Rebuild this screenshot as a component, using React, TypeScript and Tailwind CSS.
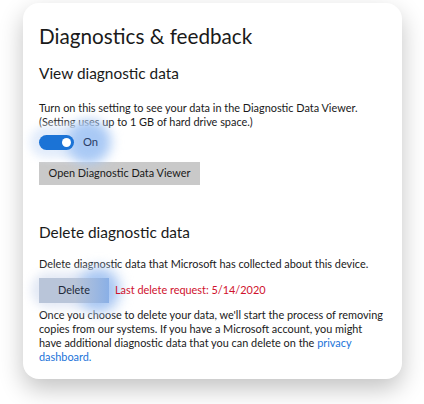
import React from "react";

export default function App() {
  return (
    <div
      className="w-[424px] h-[404px] bg-white overflow-hidden pt-[3px] pl-[23px]"
      style={{ fontFamily: 'Lato, "Open Sans", sans-serif' }}
    >
      <div className="w-[379px] h-[376px] bg-white rounded-[16px] shadow-[0_10px_24px_rgba(0,0,0,0.24)] pl-[16px] pr-[6px] pt-[19px] text-[#1a1a1a]">
        <h1 className="text-[20.7px] leading-[28px] font-normal">Diagnostics &amp; feedback</h1>
        <h2 className="mt-[12px] text-[15.4px] leading-[22px]">View diagnostic data</h2>
        <p className="mt-[17px] text-[10.9px] leading-[13.5px] whitespace-nowrap">
          Turn on this setting to see your data in the Diagnostic Data Viewer.
          <br />
          (Setting uses up to 1 GB of hard drive space.)
        </p>
        <div className="relative mt-[1px] h-[26px] flex items-center">
          <div className="absolute left-[-9px] top-[-3px] w-[68px] h-[32px] rounded-full bg-[#e2ecfb] blur-[4px]" />
          <div className="absolute left-[28px] top-[-9px] w-[44px] h-[44px] rounded-full bg-[#a9c9f5] blur-[6px]" />
          <div className="relative w-[35px] h-[15px] rounded-full bg-[#1b73d6] flex items-center justify-end pr-[3px]">
            <div className="w-[9px] h-[9px] rounded-full bg-white" />
          </div>
          <span className="relative ml-[9px] text-[11.2px] text-[#2a4068]">On</span>
        </div>
        <button className="mt-[7px] w-[161px] h-[23px] bg-[#c9c9c9] text-[10.9px] text-[#1a1a1a] flex items-center justify-center">
          Open Diagnostic Data Viewer
        </button>
        <h2 className="mt-[36px] text-[15.4px] leading-[22px]">Delete diagnostic data</h2>
        <p className="mt-[14px] text-[10.9px] leading-[14px] whitespace-nowrap">
          Delete diagnostic data that Microsoft has collected about this device.
        </p>
        <div className="relative mt-[7px] h-[25px] flex items-center">
          <div className="absolute left-[-8px] top-[-6px] w-[84px] h-[36px] rounded-full bg-[#e3e9f5] blur-[5px]" />
          <div className="absolute left-[40px] top-[-10px] w-[40px] h-[44px] rounded-full bg-[#a6c6f3] blur-[7px]" />
          <div className="relative w-[70px] h-[25px] bg-[#b9c5d9] flex items-center overflow-hidden">
            <div className="absolute right-0 top-0 w-[34px] h-full bg-gradient-to-r from-transparent to-[#7eaae9] opacity-80" />
            <span className="relative w-full text-center text-[10.9px] text-[#1f2a3a]">Delete</span>
          </div>
          <span className="relative ml-[6px] text-[10.9px] text-[#d0122d]">Last delete request: 5/14/2020</span>
        </div>
        <p className="mt-[5px] text-[10.9px] leading-[14px] whitespace-nowrap">
          Once you choose to delete your data, we'll start the process of removing
          <br />
          copies from our systems. If you have a Microsoft account, you might
          <br />
          have additional diagnostic data that you can delete on the{" "}
          <span className="text-[#1a73d9]">privacy</span>
          <br />
          <span className="text-[#1a73d9]">dashboard.</span>
        </p>
      </div>
    </div>
  );
}
